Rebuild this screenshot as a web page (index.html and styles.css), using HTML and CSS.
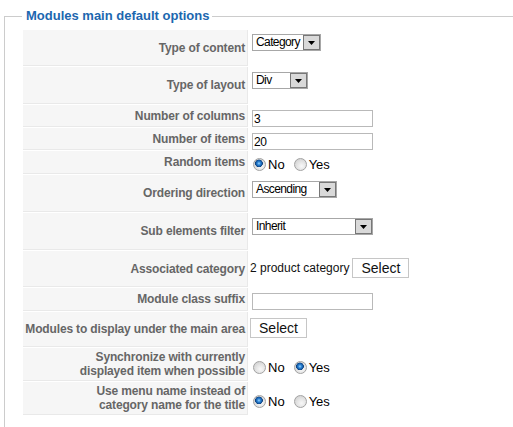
FILE: index.html
```html
<!DOCTYPE html>
<html lang="en">
<head>
<meta charset="utf-8">
<title>Modules main default options</title>
<link rel="stylesheet" href="styles.css">
</head>
<body>
<fieldset class="options">
  <legend class="options__title">Modules main default options</legend>
  <table class="params">
    <tr>
      <td class="params__key h36">Type of content</td>
      <td class="params__value h36 pt4">
        <span class="select w69"><span class="select__text">Category</span><span class="select__btn"><svg width="7" height="4" viewBox="0 0 7 4"><polygon points="0,0 7,0 3.5,4" fill="#000"/></svg></span></span>
      </td>
    </tr>
    <tr>
      <td class="params__key h37">Type of layout</td>
      <td class="params__value h37 pt5">
        <span class="select w55"><span class="select__text">Div</span><span class="select__btn"><svg width="7" height="4" viewBox="0 0 7 4"><polygon points="0,0 7,0 3.5,4" fill="#000"/></svg></span></span>
      </td>
    </tr>
    <tr>
      <td class="params__key h22">Number of columns</td>
      <td class="params__value h22 pt5"><input class="field" type="text" value="3"></td>
    </tr>
    <tr>
      <td class="params__key h22">Number of items</td>
      <td class="params__value h22 pt5"><input class="field" type="text" value="20"></td>
    </tr>
    <tr>
      <td class="params__key h21">Random items</td>
      <td class="params__value h21 pt7">
        <span class="choice"><span class="radio radio--on"></span><span class="choice__label">No</span><span class="radio"></span><span class="choice__label">Yes</span></span>
      </td>
    </tr>
    <tr>
      <td class="params__key h37">Ordering direction</td>
      <td class="params__value h37 pt6">
        <span class="select w85"><span class="select__text">Ascending</span><span class="select__btn"><svg width="7" height="4" viewBox="0 0 7 4"><polygon points="0,0 7,0 3.5,4" fill="#000"/></svg></span></span>
      </td>
    </tr>
    <tr>
      <td class="params__key h37">Sub elements filter</td>
      <td class="params__value h37 pt5">
        <span class="select w121"><span class="select__text">Inherit</span><span class="select__btn"><svg width="7" height="4" viewBox="0 0 7 4"><polygon points="0,0 7,0 3.5,4" fill="#000"/></svg></span></span>
      </td>
    </tr>
    <tr>
      <td class="params__key h36">Associated category</td>
      <td class="params__value h36 pt7"><span class="params__text">2 product category</span><button class="btn btn--gap" type="button">Select</button></td>
    </tr>
    <tr>
      <td class="params__key h23">Module class suffix</td>
      <td class="params__value h23 pt5"><input class="field" type="text" value=""></td>
    </tr>
    <tr>
      <td class="params__key h35">Modules to display under the main area</td>
      <td class="params__value h35 pt6"><button class="btn" type="button">Select</button></td>
    </tr>
    <tr>
      <td class="params__key h33">Synchronize with currently<br>displayed item when possible</td>
      <td class="params__value h33 pt13">
        <span class="choice"><span class="radio"></span><span class="choice__label">No</span><span class="radio radio--on"></span><span class="choice__label">Yes</span></span>
      </td>
    </tr>
    <tr>
      <td class="params__key h33">Use menu name instead of<br>category name for the title</td>
      <td class="params__value h33 pt13">
        <span class="choice"><span class="radio radio--on"></span><span class="choice__label">No</span><span class="radio"></span><span class="choice__label">Yes</span></span>
      </td>
    </tr>
  </table>
</fieldset>
</body>
</html>
```

FILE: styles.css
```css
html, body {
  margin: 0;
  padding: 0;
  background: #fff;
  overflow: hidden;
}

body {
  font-family: "Liberation Sans", Arial, sans-serif;
  font-size: 12px;
  color: #222;
}

.options {
  box-sizing: border-box;
  height: 419px;
  margin: 8px 0 0 4px;
  padding: 0 0 0 17px;
  border: 1px solid #cccccc;
  border-right: 0;
  border-bottom: 0;
}

.options__title {
  padding: 0 3px 0 4px;
  font-size: 13px;
  line-height: 16px;
  font-weight: bold;
  color: #1c67af;
}

.params {
  margin-top: 5px;
  border-collapse: separate;
  border-spacing: 1px;
}

.params td {
  box-sizing: border-box;
  padding: 0;
}

.params__key {
  width: 225px;
  padding-right: 2px !important;
  background: #f6f6f6;
  border-right: 1px solid #e9e9e9;
  border-bottom: 1px solid #e9e9e9;
  text-align: right;
  vertical-align: middle;
  font-weight: bold;
  color: #666;
  line-height: 14px;
  letter-spacing: -0.15px;
  white-space: nowrap;
}

.params__value {
  width: 250px;
  vertical-align: top;
  padding-left: 1px !important;
  white-space: nowrap;
}

.h21 { height: 21px; }
.h22 { height: 22px; }
.h23 { height: 23px; }
.h33 { height: 33px; }
.h35 { height: 35px; }
.h36 { height: 36px; }
.h37 { height: 37px; }

.pt4 { padding-top: 4px !important; }
.pt5 { padding-top: 5px !important; }
.pt6 { padding-top: 6px !important; }
.pt7 { padding-top: 7px !important; }
.pt13 { padding-top: 13px !important; }

.select {
  display: inline-flex;
  box-sizing: border-box;
  height: 17px;
  margin-left: 2px;
  border: 1px solid #a7a7a7;
  background: #fff;
  color: #000;
  font-size: 12px;
  letter-spacing: -0.6px;
  vertical-align: top;
}

.w55 { width: 56px; }
.w69 { width: 69px; }
.w85 { width: 85px; }
.w121 { width: 121px; }

.select__text {
  flex: 1;
  padding-left: 3px;
  line-height: 15px;
  overflow: hidden;
}

.select__btn {
  box-sizing: border-box;
  width: 17px;
  height: 15px;
  border: 1px solid #777;
  background: #d9d9d9;
  display: flex;
  align-items: flex-end;
  justify-content: center;
  padding-bottom: 4px;
}

.select__btn svg {
  display: block;
}

.field {
  box-sizing: border-box;
  width: 121px;
  height: 17px;
  margin: 0 0 0 2px;
  padding: 0 0 0 1px;
  border: 1px solid #b9b9b9;
  font-family: "Liberation Sans", Arial, sans-serif;
  font-size: 12px;
  letter-spacing: -0.4px;
  color: #000;
  background: #fff;
  vertical-align: top;
  outline: none;
}

.params__text {
  display: inline-block;
  line-height: 20px;
  vertical-align: top;
  color: #111;
}

.btn {
  box-sizing: border-box;
  width: 57px;
  height: 20px;
  margin: 0;
  padding: 0;
  border: 1px solid #c6c6c6;
  background: #fff;
  font-family: "Liberation Sans", Arial, sans-serif;
  font-size: 14px;
  line-height: 18px;
  color: #111;
  vertical-align: top;
}

.btn--gap {
  margin-left: 3px;
}

.choice {
  display: inline-flex;
  align-items: center;
  margin-left: 3px;
  font-size: 13px;
  color: #000;
  line-height: 13px;
}

.choice__label {
  margin: 0 9px 0 2px;
}

.radio {
  display: inline-block;
  box-sizing: border-box;
  width: 13px;
  height: 13px;
  border-radius: 50%;
  border: 1px solid #a2a2a2;
  background: radial-gradient(circle at 60% 65%, #f8f8f8 0, #e4e4e4 45%, #c9c9c9 100%);
}

.radio--on {
  background:
    radial-gradient(circle at 45% 40%, #9fd7ff 0, #2f86d6 1.6px, #145aa6 3px, #0d3f7a 3.6px, rgba(0,0,0,0) 4.1px),
    radial-gradient(circle at 60% 65%, #f8f8f8 0, #e4e4e4 45%, #c9c9c9 100%);
}
```
